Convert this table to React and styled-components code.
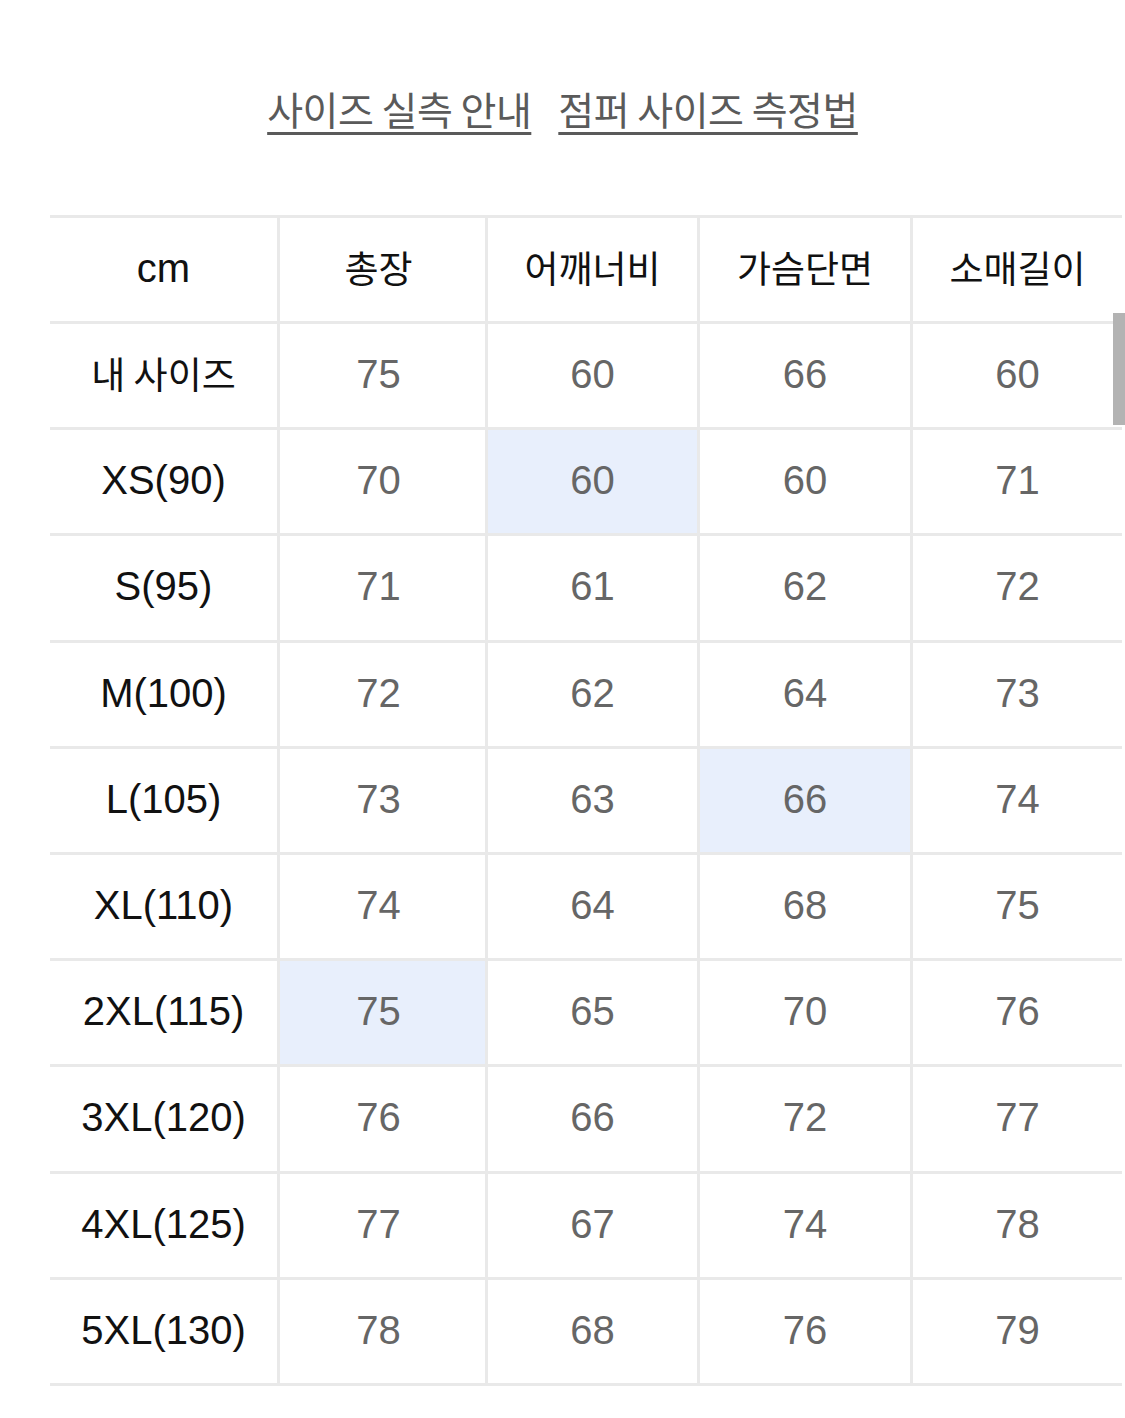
import React from 'react'
import styled, { createGlobalStyle } from 'styled-components'

const GlobalStyle = createGlobalStyle`
  html, body {
    margin: 0;
    padding: 0;
    background: #ffffff;
  }
  body {
    font-family: 'Liberation Sans', 'Noto Sans CJK KR', sans-serif;
  }
`

const Page = styled.div`
  position: relative;
  width: 1125px;
  height: 1418px;
  overflow: hidden;
  background: #ffffff;
`

const GuideLinks = styled.div`
  display: flex;
  justify-content: center;
  gap: 27px;
  padding-top: 84px;
  height: 131px;
  box-sizing: border-box;
`

const GuideLink = styled.a`
  font-family: 'Noto Sans CJK KR', sans-serif;
  font-size: 39px;
  line-height: 48px;
  color: #5a5a5a;
  text-decoration: underline;
  text-decoration-thickness: 3px;
  text-underline-offset: 7px;
  letter-spacing: -0.5px;
  cursor: pointer;
`

const Table = styled.div`
  margin: 84px 0 0 50px;
  width: 1072px;
  display: grid;
  grid-template-columns: 227px 208px 212px 213px 212px;
  grid-template-rows: 106px;
  grid-auto-rows: 106.2px;
  border-top: 3px solid #e9e9e9;
`

const Cell = styled.div`
  display: flex;
  align-items: center;
  justify-content: center;
  border-bottom: 3px solid #e9e9e9;
  border-left: ${p => (p.$first ? 'none' : '3px solid #e9e9e9')};
  background: ${p => (p.$hl ? '#e8effc' : 'transparent')};
  font-family: ${p =>
    p.$kr
      ? "'Noto Sans CJK KR', sans-serif"
      : "'Liberation Sans', 'Noto Sans CJK KR', sans-serif"};
  font-size: ${p => (p.$kr ? '37px' : '40px')};
  color: ${p => (p.$head ? '#111111' : '#666666')};
  padding-bottom: ${p => (p.$kr ? '6px' : '2px')};
  padding-right: ${p => (p.$col === 1 ? '8px' : '0')};
  box-sizing: border-box;
`

const ScrollThumb = styled.div`
  position: absolute;
  top: 313px;
  right: 0;
  width: 12px;
  height: 112px;
  background: #b3b3b3;
`

const columns = ['cm', '총장', '어깨너비', '가슴단면', '소매길이']

const rows = [
  { label: '내 사이즈', kr: true, values: [75, 60, 66, 60] },
  { label: 'XS(90)', values: [70, 60, 60, 71], hl: 1 },
  { label: 'S(95)', values: [71, 61, 62, 72] },
  { label: 'M(100)', values: [72, 62, 64, 73] },
  { label: 'L(105)', values: [73, 63, 66, 74], hl: 2 },
  { label: 'XL(110)', values: [74, 64, 68, 75] },
  { label: '2XL(115)', values: [75, 65, 70, 76], hl: 0 },
  { label: '3XL(120)', values: [76, 66, 72, 77] },
  { label: '4XL(125)', values: [77, 67, 74, 78] },
  { label: '5XL(130)', values: [78, 68, 76, 79] },
]

export default function App() {
  return (
    <Page>
      <GlobalStyle />
      <GuideLinks>
        <GuideLink>사이즈 실측 안내</GuideLink>
        <GuideLink>점퍼 사이즈 측정법</GuideLink>
      </GuideLinks>
      <Table>
        {columns.map((c, i) => (
          <Cell key={c} $head $first={i === 0} $kr={i > 0} $col={i}>
            {c}
          </Cell>
        ))}
        {rows.map(r => (
          <React.Fragment key={r.label}>
            <Cell $head $first $kr={r.kr}>
              {r.label}
            </Cell>
            {r.values.map((v, i) => (
              <Cell key={i} $hl={r.hl === i} $col={i + 1}>
                {v}
              </Cell>
            ))}
          </React.Fragment>
        ))}
      </Table>
      <ScrollThumb />
    </Page>
  )
}
